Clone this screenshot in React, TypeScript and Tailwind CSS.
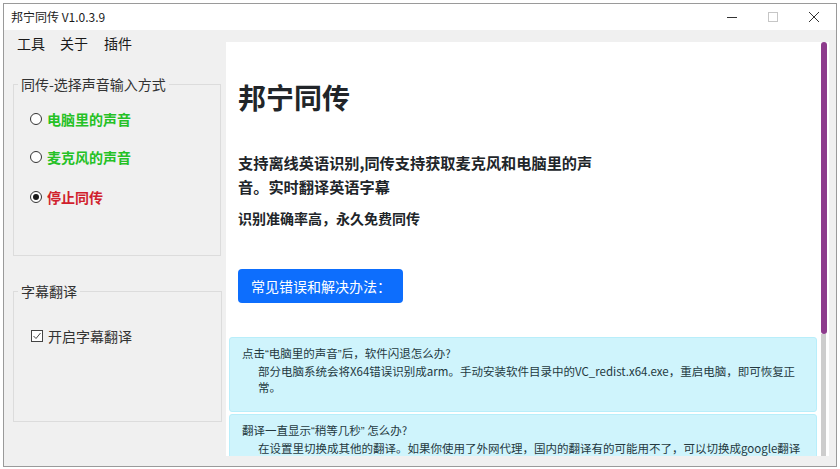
import React from "react";

function Radio({ checked, label, color, className }: { checked?: boolean; label: string; color: string; className?: string }) {
  return (
    <div className={"flex h-[20px] items-center pl-[16px] " + (className ?? "")}>
      <span className="flex h-[12px] w-[12px] items-center justify-center rounded-full border border-[#333] bg-white">
        {checked && <span className="h-[6px] w-[6px] rounded-full bg-[#1a1a1a]" />}
      </span>
      <span className={"ml-[5px] text-[14px] font-semibold leading-[20px] " + color}>{label}</span>
    </div>
  );
}

function Q({ children }: { children: React.ReactNode }) {
  return <span className="font-['Liberation_Sans',sans-serif]">{children}</span>;
}

export default function App() {
  return (
    <div className="h-[469px] w-[840px] overflow-hidden bg-white pl-[3px] pt-[3px] font-['Noto_Sans_CJK_SC',sans-serif] text-[#222]">
      <div className="flex h-[464px] w-[834px] flex-col border border-[#9a9a9a] bg-[#f0f0f0]">
        {/* title bar */}
        <div className="flex h-[26px] shrink-0 items-center bg-white pl-[7px]">
          <span className="text-[12px] leading-none text-[#1a1a1a]">邦宁同传 V1.0.3.9</span>
          <div className="ml-auto mr-[2px] flex h-full">
            <div className="flex h-full w-[41px] items-center justify-center">
              <svg width="10" height="10" viewBox="0 0 10 10">
                <line x1="0" y1="5.5" x2="10" y2="5.5" stroke="#333" strokeWidth="1" />
              </svg>
            </div>
            <div className="flex h-full w-[41px] items-center justify-center">
              <svg width="10" height="10" viewBox="0 0 10 10">
                <rect x="0.5" y="0.5" width="9" height="9" fill="none" stroke="#c6c6c6" strokeWidth="1" />
              </svg>
            </div>
            <div className="flex h-full w-[41px] items-center justify-center">
              <svg width="10" height="10" viewBox="0 0 10 10">
                <line x1="0" y1="0" x2="10" y2="10" stroke="#333" strokeWidth="1" />
                <line x1="10" y1="0" x2="0" y2="10" stroke="#333" strokeWidth="1" />
              </svg>
            </div>
          </div>
        </div>

        {/* body */}
        <div className="flex min-h-0 flex-1">
          {/* left column */}
          <div className="flex w-[222px] shrink-0 flex-col">
            <div className="flex h-[26px] items-center gap-[15px] pl-[13px] text-[14px] text-[#1a1a1a]">
              <span>工具</span>
              <span>关于</span>
              <span className="ml-[1px]">插件</span>
            </div>

            <fieldset className="ml-[9px] mt-[18px] h-[182px] w-[208px] border border-[#dcdcdc]">
              <legend className="ml-[4px] px-[3px] text-[14px] leading-[20px] text-[#333]">同传-选择声音输入方式</legend>
              <Radio className="mt-[15px]" label="电脑里的声音" color="text-[#25c125]" />
              <Radio className="mt-[18px]" label="麦克风的声音" color="text-[#25c125]" />
              <Radio className="mt-[20px]" checked label="停止同传" color="text-[#d01f2d]" />
            </fieldset>

            <fieldset className="ml-[9px] mt-[25px] h-[141px] w-[209px] border border-[#dcdcdc]">
              <legend className="ml-[4px] px-[3px] text-[14px] leading-[20px] text-[#333]">字幕翻译</legend>
              <div className="mt-[25px] flex h-[20px] items-center pl-[17px]">
                <span className="flex h-[12px] w-[12px] items-center justify-center border border-[#444] bg-white">
                  <svg width="10" height="10" viewBox="0 0 10 10">
                    <polyline points="1.5,5 4,7.5 8.5,2" fill="none" stroke="#444" strokeWidth="1" />
                  </svg>
                </span>
                <span className="ml-[5px] text-[14px] leading-[20px] text-[#333]">开启字幕翻译</span>
              </div>
            </fieldset>
          </div>

          {/* right column */}
          <div className="flex min-w-0 flex-1 pb-[10px] pr-[7px] pt-[12px]">
            <div className="flex min-w-0 flex-1 overflow-hidden bg-white">
              <div className="min-w-0 flex-1 overflow-hidden">
                <div className="pl-[12px] text-[#212529]">
                  <h1 className="mt-[38px] text-[28px] font-bold leading-[34px]">邦宁同传</h1>
                  <p className="mt-[36px] text-[15.2px] font-bold leading-[24px]">
                    支持离线英语识别,同传支持获取麦克风和电脑里的声
                    <br />
                    音。实时翻译英语字幕
                  </p>
                  <p className="mt-[10px] text-[14px] font-bold leading-[20px]">识别准确率高，永久免费同传</p>
                  <div className="mt-[41px] flex h-[34px] w-[165px] items-center rounded-[4px] bg-[#0d6efd] pl-[13px] text-[14px] text-white">
                    常见错误和解决办法：
                  </div>
                </div>

                <div className="ml-[3px] mr-[1px] mt-[34px] whitespace-nowrap rounded-[3px] border border-[#b9eefa] bg-[#cff4fc] pb-[16px] pl-[12px] pt-[7px] text-[11.5px] text-[#24393f]">
                  <div className="leading-[17px]">
                    点击<Q>“</Q>电脑里的声音<Q>”</Q>后，软件闪退怎么办?
                  </div>
                  <div className="pl-[16px] leading-[16px]">
                    部分电脑系统会将X64错误识别成arm。手动安装软件目录中的VC_redist.x64.exe，重启电脑，即可恢复正
                    <br />
                    常。
                  </div>
                </div>

                <div className="ml-[3px] mr-[1px] mt-[2px] whitespace-nowrap rounded-[3px] border border-[#b9eefa] bg-[#cff4fc] pb-[16px] pl-[12px] pt-[7px] text-[11.5px] text-[#24393f]">
                  <div className="leading-[17px]">
                    翻译一直显示<Q>“</Q>稍等几秒<Q>”</Q> 怎么办?
                  </div>
                  <div className="pl-[16px] leading-[16px]">
                    在设置里切换成其他的翻译。如果你使用了外网代理，国内的翻译有的可能用不了，可以切换成google翻译
                  </div>
                </div>
              </div>

              {/* scrollbar */}
              <div className="flex w-[11px] shrink-0 flex-col items-center">
                <div className="h-[292px] w-[6px] rounded-full bg-[#8d3b8c]" />
                <div className="w-[5px] flex-1 bg-[#cdcdcd]" />
              </div>
            </div>
          </div>
        </div>
      </div>
    </div>
  );
}
